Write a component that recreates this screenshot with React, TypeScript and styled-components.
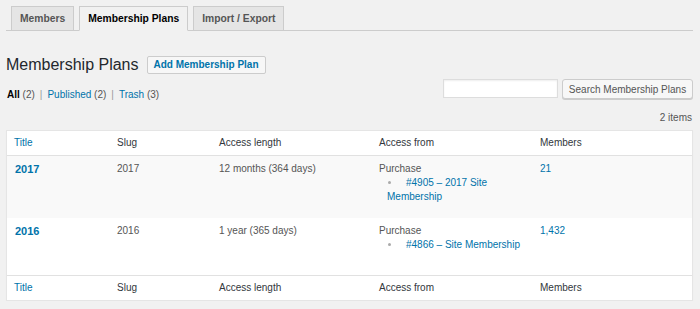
import styled, { createGlobalStyle } from 'styled-components';

const GlobalStyle = createGlobalStyle`
  html, body {
    margin: 0;
    padding: 0;
    background: #f1f1f1;
  }
  body {
    font-family: 'Liberation Sans', Arial, sans-serif;
    font-size: 10px;
    color: #444;
  }
`;

const Wrap = styled.div`
  padding: 0 7px 0 6px;
`;

const TabNav = styled.nav`
  display: flex;
  padding-top: 6px;
  border-bottom: 1px solid #ccc;
`;

const Tab = styled.a<{ $active?: boolean }>`
  display: block;
  margin: 0 0 -1px 5px;
  padding: 0 8px;
  height: 25px;
  box-sizing: border-box;
  line-height: 24px;
  font-size: 10.3px;
  font-weight: bold;
  text-decoration: none;
  border: 1px solid #ccc;
  border-bottom: 1px solid ${(p) => (p.$active ? '#f1f1f1' : '#ccc')};
  background: ${(p) => (p.$active ? '#f1f1f1' : '#e5e5e5')};
  color: ${(p) => (p.$active ? '#000' : '#555')};
`;

const HeadingRow = styled.div`
  display: flex;
  align-items: center;
  gap: 8px;
  margin-top: 25px;
  height: 18px;
`;

const Title = styled.h1`
  margin: 0;
  font-size: 16px;
  font-weight: normal;
  line-height: 18px;
  color: #23282d;
`;

const AddButton = styled.a`
  height: 18px;
  box-sizing: border-box;
  padding: 0 6px;
  line-height: 16px;
  border: 1px solid #ccc;
  border-radius: 2px;
  background: #f7f7f7;
  color: #0073aa;
  font-size: 10px;
  font-weight: bold;
  text-decoration: none;
`;

const Toolbar = styled.div`
  display: flex;
  justify-content: space-between;
  align-items: flex-start;
  margin-top: 5px;
`;

const Filters = styled.ul`
  display: flex;
  margin: 9px 0 0 1px;
  padding: 0;
  list-style: none;
  line-height: 14px;
  color: #666;
`;

const FilterItem = styled.li`
  white-space: pre;
`;

const FilterLink = styled.a<{ $current?: boolean }>`
  color: ${(p) => (p.$current ? '#000' : '#0073aa')};
  font-weight: ${(p) => (p.$current ? 'bold' : 'normal')};
  text-decoration: none;
`;

const Count = styled.span`
  color: #555;
`;

const Sep = styled.span`
  color: #999;
  padding: 0 5px;
`;

const SearchBox = styled.form`
  display: flex;
  gap: 4px;
  margin: 0;
`;

const SearchInput = styled.input`
  width: 115px;
  height: 19px;
  box-sizing: border-box;
  border: 1px solid #ddd;
  background: #fff;
  box-shadow: inset 0 1px 2px rgba(0, 0, 0, 0.07);
  outline: none;
`;

const Button = styled.button`
  width: 131px;
  height: 20px;
  padding: 0;
  border: 1px solid #ccc;
  border-radius: 3px;
  background: #f7f7f7;
  box-shadow: 0 1px 0 #ccc;
  color: #555;
  font-family: inherit;
  font-size: 10px;
`;

const ItemsCount = styled.div`
  margin: 9px 1px 5px 0;
  text-align: right;
  line-height: 14px;
  color: #555;
`;

const Table = styled.table`
  width: 100%;
  table-layout: fixed;
  border-collapse: separate;
  border-spacing: 0;
  background: #fff;
  border: 1px solid #e5e5e5;
  box-shadow: 0 1px 1px rgba(0, 0, 0, 0.04);
`;

const Th = styled.th<{ $sortable?: boolean; $foot?: boolean }>`
  box-sizing: border-box;
  padding: 5px 7px;
  line-height: 14px;
  text-align: left;
  font-weight: normal;
  color: ${(p) => (p.$sortable ? '#0073aa' : '#32373c')};
  border-top: ${(p) => (p.$foot ? '1px solid #e1e1e1' : 'none')};
  border-bottom: ${(p) => (p.$foot ? 'none' : '1px solid #e1e1e1')};
`;

const Row = styled.tr<{ $alt?: boolean }>`
  background: ${(p) => (p.$alt ? '#f9f9f9' : '#fff')};
`;

const Td = styled.td`
  padding: 6px 7px;
  vertical-align: top;
  line-height: 14px;
  color: #555;
`;

const PlanName = styled.a`
  display: block;
  padding-left: 1px;
  font-size: 11px;
  font-weight: bold;
  color: #0073aa;
  text-decoration: none;
`;

const RowActions = styled.div`
  visibility: hidden;
  height: 31px;
`;

const SourceList = styled.ul`
  margin: 0 0 8px;
  padding: 0 0 0 8px;
  list-style: none;
`;

const Bullet = styled.span`
  display: inline-block;
  width: 3px;
  height: 3px;
  border-radius: 50%;
  background: #aaa;
  margin: 0 15px 0 1px;
  vertical-align: 2px;
`;

const Link = styled.a`
  color: #0073aa;
  text-decoration: none;
`;

const columns = [
  { label: 'Title', sortable: true, width: 103 },
  { label: 'Slug', width: 102 },
  { label: 'Access length', width: 160 },
  { label: 'Access from', width: 161 },
  { label: 'Members' },
];

const plans = [
  {
    name: '2017',
    slug: '2017',
    length: '12 months (364 days)',
    product: '#4905 – 2017 Site Membership',
    members: '21',
  },
  {
    name: '2016',
    slug: '2016',
    length: '1 year (365 days)',
    product: '#4866 – Site Membership',
    members: '1,432',
  },
];

function HeaderCells({ foot }: { foot?: boolean }) {
  return (
    <tr>
      {columns.map((c) => (
        <Th key={c.label} $sortable={c.sortable} $foot={foot} style={c.width ? { width: c.width } : undefined}>
          {c.label}
        </Th>
      ))}
    </tr>
  );
}

export default function App() {
  return (
    <>
      <GlobalStyle />
      <Wrap>
        <TabNav>
          <Tab>Members</Tab>
          <Tab $active>Membership Plans</Tab>
          <Tab>Import / Export</Tab>
        </TabNav>

        <HeadingRow>
          <Title>Membership Plans</Title>
          <AddButton>Add Membership Plan</AddButton>
        </HeadingRow>

        <Toolbar>
          <Filters>
            <FilterItem>
              <FilterLink $current>All</FilterLink> <Count>(2)</Count>
              <Sep>|</Sep>
            </FilterItem>
            <FilterItem>
              <FilterLink>Published</FilterLink> <Count>(2)</Count>
              <Sep>|</Sep>
            </FilterItem>
            <FilterItem>
              <FilterLink>Trash</FilterLink> <Count>(3)</Count>
            </FilterItem>
          </Filters>
          <SearchBox onSubmit={(e) => e.preventDefault()}>
            <SearchInput type="search" />
            <Button type="submit">Search Membership Plans</Button>
          </SearchBox>
        </Toolbar>

        <ItemsCount>2 items</ItemsCount>

        <Table>
          <thead>
            <HeaderCells />
          </thead>
          <tbody>
            {plans.map((p, i) => (
              <Row key={p.name} $alt={i % 2 === 0}>
                <Td>
                  <PlanName>{p.name}</PlanName>
                  <RowActions>Edit | Trash</RowActions>
                </Td>
                <Td>{p.slug}</Td>
                <Td>{p.length}</Td>
                <Td>
                  Purchase
                  <SourceList>
                    <li>
                      <Bullet />
                      <Link>{p.product}</Link>
                    </li>
                  </SourceList>
                </Td>
                <Td>
                  <Link>{p.members}</Link>
                </Td>
              </Row>
            ))}
          </tbody>
          <tfoot>
            <HeaderCells foot />
          </tfoot>
        </Table>
      </Wrap>
    </>
  );
}
